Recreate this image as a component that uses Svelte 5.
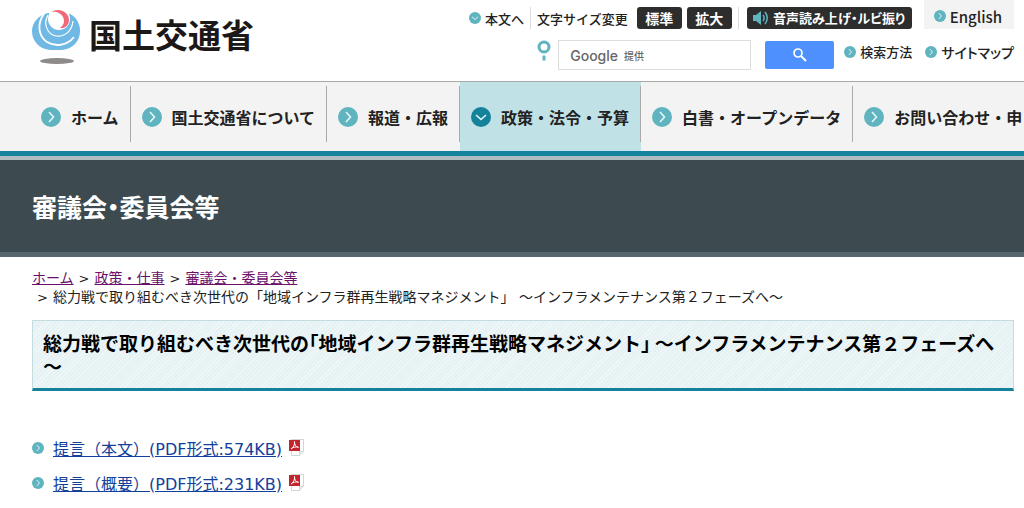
<script>
  const nav = [
    { label: 'ホーム' },
    { label: '国土交通省について' },
    { label: '報道・広報' },
    { label: '政策・法令・予算', active: true },
    { label: '白書・オープンデータ' },
    { label: 'お問い合わせ・申' },
  ];

  const crumbs = ['ホーム', '政策・仕事', '審議会・委員会等'];
  const title = '総力戦で取り組むべき次世代の「地域インフラ群再生戦略マネジメント」 ～インフラメンテナンス第２フェーズへ～';

  const docs = [
    '提言（本文）(PDF形式:574KB)',
    '提言（概要）(PDF形式:231KB)',
  ];

  let query = $state('');
  let size = $state('標準');
</script>

{#snippet arrow(px, dir = 'right', fill = '#5fb4bf')}
  <svg class="arrow" width={px} height={px} viewBox="0 0 20 20" aria-hidden="true">
    <circle cx="10" cy="10" r="10" {fill} />
    {#if dir === 'down'}
      <path d="M5 8l5 4.5L15 8" fill="none" stroke="#e6f6f7" stroke-width="1.6" />
    {:else}
      <path d="M8 5l4.5 5L8 15" fill="none" stroke="#e6f6f7" stroke-width="1.6" />
    {/if}
  </svg>
{/snippet}

<header class="top">
  <a class="logo" href="#home">
    <svg width="48" height="54" viewBox="0 0 48 54" aria-hidden="true">
      <ellipse cx="25" cy="51" rx="17" ry="3" fill="#8f8b8a" />
      <path d="M16 3C7 5 0 12 0 21c0 11 8 18 18 19h12c10-1 18-8 18-19 0-8-4-14-10-17z" fill="#6fb9e4" />
      <circle cx="27" cy="9" r="11" fill="#fff" />
      <path d="M17 0h20v6H17z" fill="#fff" />
      <path d="M12 4C5 13 6 26 15 32c8 5 20 4 27-5" fill="none" stroke="#fff" stroke-width="1.8" />
      <path d="M16 5c-5 9-1 19 8 21 9 1 16-5 17-15" fill="none" stroke="#fff" stroke-width="1.2" />
      <path d="M19 2C27-3 37 2 37 10c0 5-4 9-9 8 4-3 5-7 3-11-2-4-7-6-12-5z" fill="#ef6a79" />
    </svg>
    <span>国土交通省</span>
  </a>

  <div class="tools">
    <div class="row">
      <a class="skip" href="#main">{@render arrow(12, 'down')}本文へ</a>
      <div class="sizes">
        <span class="size-label">文字サイズ変更</span>
        {#each ['標準', '拡大'] as s (s)}
          <button class="dark" aria-pressed={size === s} onclick={() => (size = s)}>{s}</button>
        {/each}
      </div>
      <button class="dark voice">
        <svg width="16" height="14" viewBox="0 0 16 14" aria-hidden="true">
          <path d="M0 4h3l5-4v14l-5-4H0z" fill="#5fb4bf" />
          <path d="M10 4c1.500 2 1.500 4 0 6M12 1c3 4 3 8 0 12" fill="none" stroke="#5fb4bf" stroke-width="1.5" />
        </svg>
        音声読み上げ・ルビ振り
      </button>
      <a class="english" href="#en">{@render arrow(12)}English</a>
    </div>

    <form class="row second" onsubmit={(e) => e.preventDefault()}>
      <svg class="pin" width="14" height="21" viewBox="0 0 14 21" aria-hidden="true">
        <circle cx="7" cy="7" r="5" fill="none" stroke="#5fb4bf" stroke-width="3" />
        <path d="M7 15.500v5" stroke="#5fb4bf" stroke-width="3" />
      </svg>
      <div class="search">
        <label for="q"><b>Google</b> <small>提供</small></label>
        <input id="q" type="text" bind:value={query} />
      </div>
      <button class="go" aria-label="検索">
        <svg width="14" height="14" viewBox="0 0 14 14" aria-hidden="true">
          <circle cx="5" cy="5" r="4" fill="none" stroke="#fff" stroke-width="1.7" />
          <path d="M8 8l5 5" stroke="#fff" stroke-width="2" />
        </svg>
      </button>
      <div class="links">
        <a href="#help">{@render arrow(12)}検索方法</a>
        <a class="sitemap" href="#sitemap">{@render arrow(12)}サイトマップ</a>
      </div>
    </form>
  </div>
</header>

<nav>
  <ul>
    {#each nav as item (item.label)}
      <li class:active={item.active}>
        <a href="#nav">
          {@render arrow(20, item.active ? 'down' : 'right', item.active ? '#13829a' : '#5fb4bf')}
          {item.label}
        </a>
      </li>
    {/each}
  </ul>
</nav>

<div class="banner">審議会・委員会等</div>

<main id="main">
  <div class="crumbs">
    <div>
      {#each crumbs as c, i (c)}
        {#if i}<span class="gt">&gt;</span>{/if}<a href="#crumb">{c}</a>
      {/each}
    </div>
    <div><span class="gt">&gt;</span>{title}</div>
  </div>

  <h1>{title}</h1>

  <ul class="docs">
    {#each docs as d (d)}
      <li>
        {@render arrow(12)}
        <a href="#pdf">{d}</a>
        <svg width="16" height="17" viewBox="0 0 16 17" aria-hidden="true">
          <path d="M2.500.500h12v12l-4 4h-8z" fill="#fff" stroke="#d5d5d5" />
          <path d="M14.500 12.500h-4v4" fill="#eee" stroke="#d5d5d5" />
          <rect y="1" width="11" height="11" fill="#c4242b" />
          <path d="M2 10c2-1 4-4 3.500-7.500C5.500 6 7 8 9.500 8.300 7 7.500 4 8 2 10z" fill="none" stroke="#fff" />
        </svg>
      </li>
    {/each}
  </ul>
</main>

<style>
  :global(body) {
    background: #fff; color: #222; overflow-x: hidden;
    font-family: "DejaVu Sans", "Noto Sans CJK JP", sans-serif;
  }
  a { color: inherit; text-decoration: none; }
  ul { list-style: none; margin: 0; padding: 0; }
  svg { flex: none; }
  button { border: 0; padding: 0; font: inherit; cursor: pointer; }

  .top {
    display: flex; justify-content: space-between; height: 81px;
    padding: 0 10px 0 32px; border-bottom: 1px solid #a9a9a9;
    font-family: "Noto Sans CJK JP", sans-serif;
  }
  .logo {
    display: flex; align-items: flex-start; gap: 9px; padding-top: 10px;
    font-size: 33px; line-height: 48px; font-weight: 700; color: #1c1818;
  }
  .row { display: flex; align-items: center; justify-content: flex-end; font-size: 13px; font-weight: 500; white-space: nowrap; }
  .row a { display: flex; align-items: center; gap: 4px; }
  .skip { height: 22px; margin-top: 7px; padding-right: 6px; border-right: 1px solid #ddd; }
  .sizes { display: flex; align-items: center; gap: 5px; height: 22px; margin-top: 7px; padding: 0 6px; border-right: 1px solid #ddd; }
  .size-label { margin-right: 4px; }
  .dark { width: 45px; height: 22px; border-radius: 3px; background: #2d2d2d; color: #fff; font-size: 14px; font-weight: 700; line-height: 22px; }
  .voice {
    display: flex; align-items: center; justify-content: center; gap: 4px;
    width: 165px; margin: 7px 12px 0 8px; font-size: 13px; font-feature-settings: "palt";
  }
  .row .english { height: 29px; box-sizing: border-box; padding: 3px 12px 0 10px; background: #f3f3f3; font-size: 15px; }
  .second { padding-top: 11px; }
  .pin { margin-right: 7px; align-self: flex-start; }
  .search { display: flex; align-items: center; box-sizing: border-box; width: 193px; height: 30px; padding-left: 11px; border: 1px solid #ddd; }
  .search label { display: flex; align-items: center; gap: 6px; color: #666; }
  .search b { font: 500 14px "Inter", sans-serif; }
  .search small { font-size: 10px; }
  .search input { flex: 1; min-width: 0; border: 0; outline: 0; background: transparent; font: inherit; }
  .go { display: flex; align-items: center; justify-content: center; width: 69px; height: 28px; margin: 0 10px 0 14px; border-radius: 2px; background: #4d90fe; }
  .links { display: flex; gap: 13px; height: 30px; line-height: 24px; align-items: flex-start; }
  .links .sitemap { font-size: 14px; font-feature-settings: "palt"; }

  nav { background: #f3f3f3; border-bottom: 5px solid #13829a; overflow: hidden; font-family: "Noto Sans CJK JP", sans-serif; }
  nav ul { display: flex; padding-left: 30px; }
  nav li { flex: none; background: linear-gradient(#aaa, #aaa) right 4px / 1px 56px no-repeat; }
  nav .active { background-color: #c0e1e5; }
  nav a { display: flex; align-items: center; gap: 10px; height: 69px; padding: 0 12px 0 11px; font-size: 16px; font-weight: 700; }

  .banner {
    height: 92px; padding-left: 32px;
    border-top: 4px solid #aebdc0; border-bottom: 5px solid #57666d;
    background: #3d4a50; color: #fff; font: 700 25px/92px "Noto Sans CJK JP", sans-serif; font-feature-settings: "palt";
  }

  main { padding: 12px 10px 10px 32px; }
  .crumbs { font-size: 14px; line-height: 19px; }
  .crumbs > div { height: 19px; }
  .crumbs a { color: #6b1069; text-decoration: underline; }
  .gt { margin: 0 5px; font-size: 13px; }
  h1 {
    margin: 13px 0 39px; padding: 10px 10px 11px; border: 1px solid #c3dcdf; border-bottom: 3px solid #13829a;
    background: repeating-linear-gradient(135deg, #eff7f8 0 1px, #e5f1f3 1px 3px);
    color: #000; font: 700 19px/23px "Noto Sans CJK JP", sans-serif; font-feature-settings: "halt";
  }
  .docs li { display: flex; align-items: center; height: 35px; font-size: 16px; }
  .docs a { margin: 0 7px 0 9px; color: #12409b; text-decoration: underline; }
</style>
